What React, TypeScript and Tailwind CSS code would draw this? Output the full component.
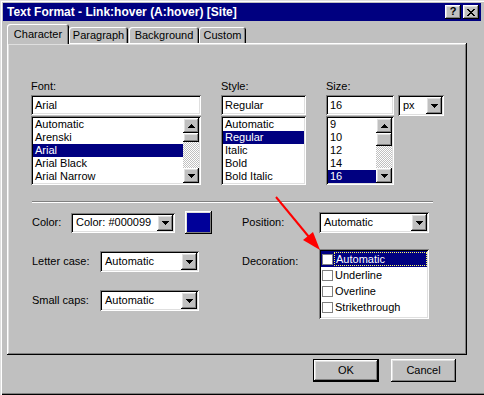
import React from "react";

const raised =
	"shadow-[inset_-1px_-1px_#000,inset_1px_1px_#fff,inset_-2px_-2px_#808080,inset_2px_2px_#dfdfdf]";
const sunken =
	"shadow-[inset_1px_1px_#808080,inset_-1px_-1px_#fff,inset_2px_2px_#000,inset_-2px_-2px_#dfdfdf]";

const Tri = ({ up = false }: { up?: boolean }) => (
	<svg width="7" height="4" viewBox="0 0 7 4" shapeRendering="crispEdges">
		{up ? (
			<path d="M3 0h1v1h1v1h1v1h1v1H0V3h1V2h1V1h1Z" fill="#000" />
		) : (
			<path d="M0 0h7v1H6v1H5v1H4v1H3V3H2V2H1V1H0Z" fill="#000" />
		)}
	</svg>
);

const ScrollBtn = ({ up = false }: { up?: boolean }) => (
	<div className={`${raised} bg-[#c0c0c0] w-[16px] h-[15px] flex items-center justify-center`}>
		<Tri up={up} />
	</div>
);

const Scrollbar = ({ thumb }: { thumb: string }) => (
	<div className="w-[16px] h-full flex flex-col">
		<ScrollBtn up />
		<div className={`${raised} bg-[#c0c0c0] w-[16px] ${thumb}`} />
		<div className="flex-1 bg-[repeating-conic-gradient(#c0c0c0_0%_25%,#fff_0%_50%)] bg-[length:2px_2px]" />
		<ScrollBtn />
	</div>
);

type ListProps = {
	items: string[];
	selected: string;
	thumb?: string;
};

const ListBox = ({ items, selected, thumb }: ListProps) => (
	<div className={`${sunken} bg-white h-[69px] p-[2px] flex`}>
		<div className="flex-1 flex flex-col">
			{items.map((item) => (
				<div
					key={item}
					className={
						item === selected
							? "h-[13px] pl-[2px] bg-[#000080] text-white whitespace-nowrap"
							: "h-[13px] pl-[2px] whitespace-nowrap"
					}>
					{item}
				</div>
			))}
		</div>
		{thumb && <Scrollbar thumb={thumb} />}
	</div>
);

const Select = ({ value, className }: { value: string; className: string }) => (
	<div className={`${sunken} bg-white flex items-stretch p-[2px] ${className}`}>
		<span className="flex-1 pl-[3px] flex items-center whitespace-nowrap">{value}</span>
		<div className={`${raised} bg-[#c0c0c0] w-[16px] flex items-center justify-center`}>
			<Tri />
		</div>
	</div>
);

const Input = ({ value }: { value: string }) => (
	<div className={`${sunken} bg-white h-[20px] flex items-center pl-[4px]`}>{value}</div>
);

const tabs = ["Character", "Paragraph", "Background", "Custom"];
const tabWidths = ["w-[62px]", "w-[59px]", "w-[70px]", "w-[47px]"];

const decorations = ["Automatic", "Underline", "Overline", "Strikethrough"];

export default function App() {
	return (
		<div className="relative w-[484px] h-[395px] bg-[#c0c0c0] p-[3px] flex flex-col text-[11px] leading-[13px] text-black font-['Liberation_Sans',Arial,sans-serif] shadow-[inset_1px_1px_#dfdfdf,inset_2px_2px_#fff,inset_0_-1px_#000,inset_0_-2px_#808080]">
			{/* Title bar */}
			<div className="h-[18px] bg-[#000080] flex items-center pl-[4px] pr-[2px]">
				<span className="flex-1 text-white font-bold text-[12px] whitespace-nowrap">
					Text Format - Link:hover (A:hover) [Site]
				</span>
				<div className="flex gap-[2px]">
					<div className={`${raised} bg-[#c0c0c0] w-[16px] h-[14px] flex items-center justify-center font-bold text-[11px] leading-none pb-[1px]`}>
						?
					</div>
					<div className={`${raised} bg-[#c0c0c0] w-[16px] h-[14px] flex items-center justify-center`}>
						<svg width="8" height="7" viewBox="0 0 8 7" shapeRendering="crispEdges">
							<path
								d="M0 0h2v1h1v1h2V1h1V0h2v1H7v1H6v1H5v1h1v1h1v1h1v1H6V6H5V5H3v1H2v1H0V6h1V5h1V4h1V3H2V2H1V1H0Z"
								fill="#000"
							/>
						</svg>
					</div>
				</div>
			</div>

			{/* Tabs */}
			<div className="mt-[3px] ml-[4px] h-[19px] flex items-end relative z-10">
				{tabs.map((t, i) => (
					<div
						key={t}
						className={
							(i === 0
								? "h-[20px] -mb-px bg-[#c0c0c0] "
								: i === 2
									? "h-[16px] ml-[1px] "
									: "h-[16px] ") +
							tabWidths[i] +
							" rounded-t-[3px] flex items-center justify-center pt-[1px] shadow-[inset_1px_1px_#fff,inset_-1px_0_#000,inset_-2px_0_#808080]"
						}>
						{t}
					</div>
				))}
			</div>

			{/* Panel */}
			<div className={`${raised} ml-[4px] w-[460px] h-[312px] pt-[37px] pl-[24px] flex flex-col`}>
				<div className="flex items-start">
					<div className="w-[170px] flex flex-col">
						<span className="h-[13px]">Font:</span>
						<div className="mt-[2px]">
							<Input value="Arial" />
						</div>
						<div className="mt-[1px]">
							<ListBox
								items={["Automatic", "Arenski", "Arial", "Arial Black", "Arial Narrow"]}
								selected="Arial"
								thumb="h-[9px]"
							/>
						</div>
					</div>
					<div className="w-[85px] ml-[20px] flex flex-col">
						<span className="h-[13px]">Style:</span>
						<div className="mt-[2px]">
							<Input value="Regular" />
						</div>
						<div className="mt-[1px]">
							<ListBox
								items={["Automatic", "Regular", "Italic", "Bold", "Bold Italic"]}
								selected="Regular"
							/>
						</div>
					</div>
					<div className="w-[68px] ml-[20px] flex flex-col">
						<span className="h-[13px]">Size:</span>
						<div className="mt-[2px]">
							<Input value="16" />
						</div>
						<div className="mt-[1px]">
							<ListBox items={["9", "10", "12", "14", "16"]} selected="16" thumb="h-[13px]" />
						</div>
					</div>
					<div className="ml-[4px] mt-[15px]">
						<Select value="px" className="w-[46px] h-[21px]" />
					</div>
				</div>

				<div className="mt-[16px] ml-[1px] w-[401px] h-[2px] border-t border-t-[#808080] border-b border-b-white" />

				<div className="mt-[8px] flex items-start">
					<div className="w-[210px] ml-[1px] flex flex-col gap-[16px]">
						<div className="h-[23px] flex items-center">
							<span className="w-[39px]">Color:</span>
							<Select value="Color: #000099" className="w-[104px] h-[20px]" />
							<div className={`${raised} ml-[10px] w-[27px] h-[23px] p-[2px]`}>
								<div className="w-full h-full bg-[#000099]" />
							</div>
						</div>
						<div className="h-[23px] flex items-center">
							<span className="w-[68px]">Letter case:</span>
							<Select value="Automatic" className="w-[99px] h-[21px]" />
						</div>
						<div className="h-[23px] flex items-center">
							<span className="w-[68px]">Small caps:</span>
							<Select value="Automatic" className="w-[99px] h-[21px]" />
						</div>
					</div>
					<div className="flex flex-col">
						<div className="h-[23px] flex items-center">
							<span className="w-[77px]">Position:</span>
							<Select value="Automatic" className="w-[110px] h-[21px]" />
						</div>
						<div className="mt-[15px] flex items-start">
							<span className="w-[77px] mt-[6px]">Decoration:</span>
							<div className={`${sunken} bg-white w-[110px] h-[70px] p-[2px] flex flex-col`}>
								{decorations.map((d, i) => (
									<div
										key={d}
										className={
											i === 0
												? "h-[16px] flex items-center bg-[#000080] text-white"
												: "h-[16px] flex items-center"
										}>
										<div className="ml-[1px] w-[11px] h-[11px] border border-[#808080] bg-white" />
										<span
											className={
												i === 0
													? "ml-[1px] flex-1 h-[14px] pl-[1px] border border-dotted border-[#ffff60] leading-[12px] whitespace-nowrap"
													: "ml-[2px] flex-1 whitespace-nowrap"
											}>
											{d}
										</span>
									</div>
								))}
							</div>
						</div>
					</div>
				</div>
			</div>

			{/* Buttons */}
			<div className="mt-[4px] flex justify-end gap-[12px] pr-[25px]">
				<div className="w-[66px] h-[23px] border border-black">
					<div className={`${raised} w-full h-full flex items-center justify-center`}>OK</div>
				</div>
				<div className={`${raised} w-[65px] h-[23px] flex items-center justify-center`}>Cancel</div>
			</div>

			{/* Red arrow annotation */}
			<svg className="absolute inset-0 pointer-events-none z-20" width="484" height="395">
				<line x1="276" y1="197" x2="309" y2="237" stroke="#ff0000" strokeWidth="2" />
				<polygon points="320,250 303,240 313,232" fill="#ff0000" />
			</svg>
		</div>
	);
}
